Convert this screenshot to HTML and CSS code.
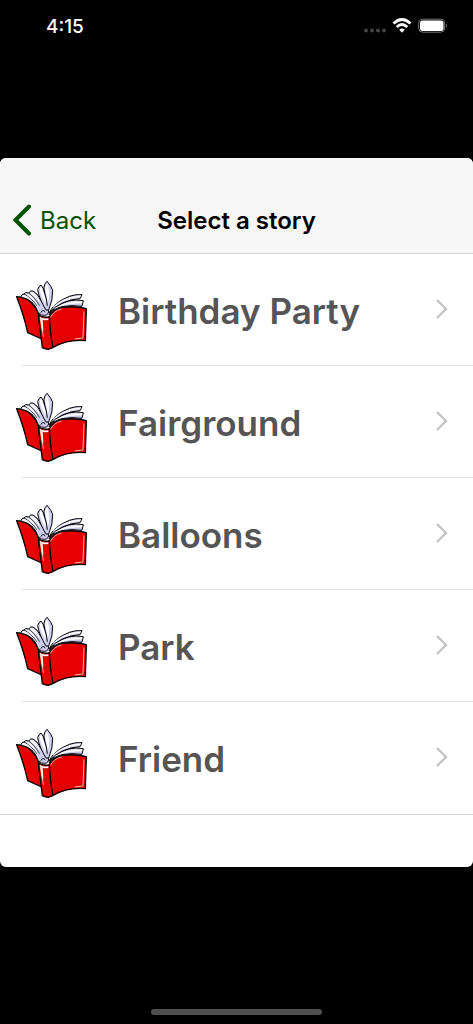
FILE: index.html
```html
<!DOCTYPE html>
<html lang="en">
<head>
    <meta charset="UTF-8">
    <meta name="viewport" content="width=device-width, initial-scale=1">
    <title>Select a story</title>
    <link rel="stylesheet" href="styles.css">
</head>
<body>
    <!-- Shared drawings, reused by every row -->
    <svg class="shared-icons" aria-hidden="true">
        <symbol id="book" viewBox="45 27 225 213">
            <!-- Covers -->
            <path fill="#e60000" stroke="#000" stroke-width="4" stroke-linejoin="round" d="M50 77 Q77 78 93 94 Q107 108 117 130 L125 204 L83 185 Q73 137 50 77 Z"/>
            <path fill="#e60000" stroke="#000" stroke-width="4" stroke-linejoin="round" d="M148 138 Q158 115 188 109 Q226 104 259 113 L256 209 Q202 204 158 230 Q149 180 148 138 Z"/>
            <path fill="#e60000" stroke="#000" stroke-width="4" stroke-linejoin="round" d="M115 132 Q132 142 148 137 Q150 189 159 229 Q146 240 127 230 Q121 181 115 132 Z"/>
            <path fill="none" stroke="#ffb0a6" stroke-width="3" stroke-linecap="round" d="M152 138 Q160 120 184 114 M252 123 L249 201 L225 204 M121 144 L130 196"/>
            <path fill="#fff" d="M119 137 Q135 146 145 141 L145 147 Q130 149 121 143 Z M122 145 L128 147 L130 181 L126 177 Z"/>
            <!-- Right pages, lowest first -->
            <path fill="#c9cbea" stroke="#000" stroke-width="3" stroke-linejoin="round" d="M147 132 Q164 102 205 90 Q228 84 250 89 L246 106 Q214 101 186 107 Q158 114 147 132 Z"/>
            <path fill="#fff" d="M160 112 Q190 92 247 91 L246 97 Q192 96 160 115 Z"/>
            <path fill="#d0d2ee" stroke="#000" stroke-width="3" stroke-linejoin="round" d="M147 126 Q162 94 208 76 Q228 69 246 71 L240 83 Q184 86 147 126 Z"/>
            <path fill="#fff" d="M160 106 Q188 80 243 73 L241 77 Q190 84 160 109 Z"/>
            <!-- Left pages, fanned towards the spine -->
            <path fill="#c9cbea" stroke="#000" stroke-width="3" stroke-linejoin="round" d="M62 79 Q65 68 72 69 Q75 62 86 66 Q92 57 99 60 Q113 66 122 88 L146 120 Q145 133 134 133 Q124 134 115 126 Q101 83 62 79 Z"/>
            <path fill="#fff" d="M65 77 Q68 70 76 73 Q98 82 112 107 L118 124 Q103 82 65 77 Z M80 68 Q94 68 117 105 Q99 84 78 71 Z M93 63 Q107 64 123 97 Q108 79 91 67 Z"/>
            <path fill="none" stroke="#000" stroke-width="2" stroke-linecap="round" d="M73 70 Q92 77 110 104 M87 67 Q101 76 118 103"/>
            <path fill="#d0d2ee" stroke="#000" stroke-width="3" stroke-linejoin="round" d="M138 117 Q117 82 113 56 Q116 45 123 42 Q130 50 134 65 Q131 54 132 48 Q134 37 141 31 Q153 43 158 58 Q159 87 146 117 Z"/>
            <path fill="#fff" d="M119 52 Q122 46 125 48 L135 82 L137 99 Q122 78 119 52 Z M135 48 Q138 39 142 37 Q149 59 147 80 L143 99 Z"/>
            <path fill="none" stroke="#000" stroke-width="3" stroke-linecap="round" d="M133 62 Q141 86 142 103 M123 124 Q128 113 135 122"/>
        </symbol>
        <symbol id="chevron" viewBox="0 0 12 20">
            <path fill="none" stroke="currentColor" stroke-width="2.4" d="M1 1 L10 10 L1 19"/>
        </symbol>
    </svg>

    <div class="status-bar">
        <time class="clock">4:15</time>
        <svg class="status-icons" width="84" height="18" viewBox="0 0 84 18" aria-hidden="true">
            <g fill="#444">
                <circle cx="2" cy="14.5" r="2"/>
                <circle cx="8" cy="14.5" r="2"/>
                <circle cx="14" cy="14.5" r="2"/>
                <circle cx="20" cy="14.5" r="2"/>
            </g>
            <g fill="none" stroke="#fff" stroke-width="2.7">
                <path d="M29.5 7.5 Q38 -0.5 46.5 7.5"/>
                <path d="M32.7 11 Q38 6 43.3 11"/>
            </g>
            <path fill="#fff" d="M35.2 13.8 Q38 11.4 40.8 13.8 L38 16.8 Z"/>
            <rect x="54.7" y="3.2" width="26" height="13" rx="4" fill="none" stroke="#777"/>
            <rect x="56" y="4.5" width="23.5" height="10.5" rx="2.5" fill="#fff"/>
            <path fill="#777" d="M82 7.5 Q84 9.7 82 12 Z"/>
        </svg>
    </div>

    <main class="sheet">
        <header class="nav-bar">
            <a class="back" href="#">
                <svg width="19" height="32" viewBox="0 0 19 32" aria-hidden="true">
                    <path d="M17 2.5 L3.5 16 L17 29.5"/>
                </svg>
                Back
            </a>
            <h1 class="title">Select a story</h1>
        </header>

        <ul class="stories">
            <li><a class="story" href="#">
                <svg class="book"><use href="#book"/></svg>
                <span class="name">Birthday Party</span>
                <svg class="chevron"><use href="#chevron"/></svg>
            </a></li>
            <li><a class="story" href="#">
                <svg class="book"><use href="#book"/></svg>
                <span class="name">Fairground</span>
                <svg class="chevron"><use href="#chevron"/></svg>
            </a></li>
            <li><a class="story" href="#">
                <svg class="book"><use href="#book"/></svg>
                <span class="name">Balloons</span>
                <svg class="chevron"><use href="#chevron"/></svg>
            </a></li>
            <li><a class="story" href="#">
                <svg class="book"><use href="#book"/></svg>
                <span class="name">Park</span>
                <svg class="chevron"><use href="#chevron"/></svg>
            </a></li>
            <li><a class="story" href="#">
                <svg class="book"><use href="#book"/></svg>
                <span class="name">Friend</span>
                <svg class="chevron"><use href="#chevron"/></svg>
            </a></li>
        </ul>
    </main>

    <div class="home-area">
        <div class="home-indicator"></div>
    </div>
</body>
</html>
```
FILE: styles.css
```css
* {
    box-sizing: border-box;
}

/* Status bar and home area share the space left around the sheet */
body {
    display: grid;
    grid-template-rows: 1fr auto 1fr;
    min-height: 100vh;
    margin: 0;
    background: #000;
    font-family: Inter, "Liberation Sans", sans-serif;
}

a {
    color: inherit;
    text-decoration: none;
}

.shared-icons {
    position: absolute;
    width: 0;
    height: 0;
}

/* Status bar */
.status-bar {
    display: flex;
    justify-content: space-between;
    align-items: flex-start;
    padding: 16px 25px 16px 46px;
    color: #fff;
}

.clock {
    font-size: 19px;
    font-weight: 500;
    line-height: 22px;
}

/* White sheet with the list */
.sheet {
    padding-bottom: 52px;
    border-radius: 6px;
    background: #fff;
    overflow: hidden;
}

.nav-bar {
    display: grid;
    grid-template-columns: 1fr auto 1fr;
    align-items: center;
    padding: 46px 12px 16px;
    border-bottom: 1px solid #d4d4d4;
    background: #f6f6f6;
}

.back {
    display: flex;
    align-items: center;
    gap: 9px;
    color: #005200;
    font-size: 24px;
    line-height: 33px;
}

.back path {
    fill: none;
    stroke: currentColor;
    stroke-width: 4;
    stroke-linecap: round;
}

.title {
    margin: 0;
    font-size: 24px;
    font-weight: 600;
    line-height: 33px;
}

/* Story rows */
.stories {
    margin: 0;
    padding: 0;
    border-bottom: 1px solid #d4d4d4;
    list-style: none;
}

.stories li {
    padding-left: 15px;
    background: linear-gradient(#e2e2e2, #e2e2e2) 22px 100% / 100% 1px no-repeat;
}

.stories li:last-child {
    background: none;
}

.story {
    display: flex;
    align-items: center;
    height: 112px;
    padding: 2px 25px 0 0;
}

.book {
    width: 75px;
    height: 71px;
    margin-top: 10px;
}

.name {
    flex: 1;
    margin-left: 28px;
    color: #555;
    font-size: 35px;
    font-weight: 600;
    line-height: 44px;
}

.chevron {
    width: 12px;
    height: 20px;
    margin-bottom: 4px;
    color: #c4c4c4;
}

/* Home indicator */
.home-area {
    display: flex;
    justify-content: center;
    align-items: flex-end;
    padding-bottom: 9px;
}

.home-indicator {
    width: 36%;
    height: 6px;
    border-radius: 3px;
    background: #4f4f4f;
}
```
